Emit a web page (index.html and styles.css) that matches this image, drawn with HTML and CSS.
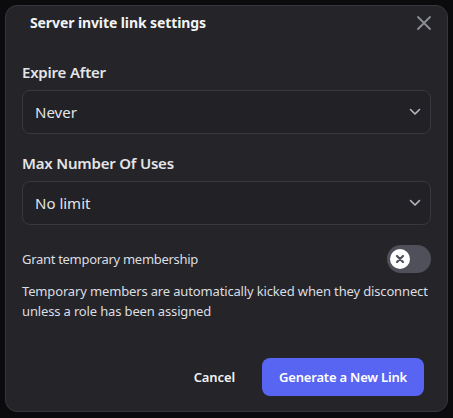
FILE: index.html
```html
<!DOCTYPE html>
<html lang="en">
<head>
    <meta charset="UTF-8">
    <meta name="viewport" content="width=device-width, initial-scale=1.0">
    <title>Server invite link settings</title>
    <link rel="stylesheet" href="styles.css">
</head>
<body>
    <div class="modal">
        <div class="modal-header">
            <h1 class="modal-title">Server invite link settings</h1>
            <button class="close-btn" aria-label="Close">
                <svg width="16" height="16" viewBox="0 0 16 16">
                    <path d="M2 2L14 14M14 2L2 14" stroke="currentColor" stroke-width="1.8" stroke-linecap="round"/>
                </svg>
            </button>
        </div>

        <div class="modal-body">
            <label class="field-label">Expire After</label>
            <div class="select">
                <span>Never</span>
                <svg class="chevron" width="12" height="8" viewBox="0 0 12 8">
                    <path d="M1.5 1.5L6 6L10.5 1.5" stroke="currentColor" stroke-width="1.6" fill="none" stroke-linecap="round" stroke-linejoin="round"/>
                </svg>
            </div>

            <label class="field-label second">Max Number Of Uses</label>
            <div class="select">
                <span>No limit</span>
                <svg class="chevron" width="12" height="8" viewBox="0 0 12 8">
                    <path d="M1.5 1.5L6 6L10.5 1.5" stroke="currentColor" stroke-width="1.6" fill="none" stroke-linecap="round" stroke-linejoin="round"/>
                </svg>
            </div>

            <div class="switch-row">
                <span>Grant temporary membership</span>
                <div class="switch">
                    <div class="knob">
                        <svg width="10" height="10" viewBox="0 0 10 10">
                            <path d="M2 2L8 8M8 2L2 8" stroke="#4f505a" stroke-width="2.2" stroke-linecap="round"/>
                        </svg>
                    </div>
                </div>
            </div>
            <p class="note">Temporary members are automatically kicked when they disconnect unless a role has been assigned</p>
        </div>

        <div class="modal-footer">
            <button class="btn-link">Cancel</button>
            <button class="btn-primary">Generate a New Link</button>
        </div>
    </div>
</body>
</html>
```

FILE: styles.css
```css
body {
    margin: 0;
    padding: 5px;
    background-color: #0b0b0d;
    font-family: "Noto Sans", "Open Sans", sans-serif;
    color: #dbdee1;
}
.modal {
    width: 443px;
    height: 407px;
    box-sizing: border-box;
    background-color: #242429;
    border: 1px solid #36363c;
    border-radius: 12px;
    display: flex;
    flex-direction: column;
}
.modal-header {
    display: flex;
    align-items: center;
    justify-content: space-between;
    padding: 7px 15px 0 24px;
}
.modal-title {
    margin: 0;
    font-size: 14px;
    line-height: 20px;
    font-weight: 700;
    letter-spacing: -0.1px;
    color: #f2f3f5;
}
.close-btn {
    background: none;
    border: none;
    padding: 0;
    width: 16px;
    height: 16px;
    color: #8e8f96;
    cursor: pointer;
}
.modal-body {
    padding: 29px 16px 0 16px;
}
.field-label {
    display: block;
    font-size: 15px;
    line-height: 20px;
    font-weight: 600;
    letter-spacing: -0.2px;
    color: #e3e5e8;
    margin-bottom: 8px;
}
.field-label.second {
    margin-top: 19px;
}
.select {
    height: 44px;
    box-sizing: border-box;
    border: 1px solid #38383e;
    border-radius: 8px;
    background-color: #212126;
    display: flex;
    align-items: center;
    justify-content: space-between;
    padding: 0 9px 0 12px;
    font-size: 15px;
    color: #e3e5e8;
}
.chevron {
    color: #b5bac1;
}
.switch-row {
    display: flex;
    align-items: center;
    justify-content: space-between;
    margin-top: 20px;
    font-size: 13px;
    letter-spacing: -0.3px;
    color: #dbdee1;
}
.switch {
    width: 44px;
    height: 28px;
    border-radius: 14px;
    background-color: #4f505a;
    display: flex;
    align-items: center;
    padding-left: 3px;
    box-sizing: border-box;
}
.knob {
    width: 20px;
    height: 20px;
    border-radius: 50%;
    background-color: #ffffff;
    display: flex;
    align-items: center;
    justify-content: center;
}
.note {
    margin: 8px 0 0 0;
    font-size: 13px;
    line-height: 20px;
    letter-spacing: -0.15px;
    color: #dbdee1;
}
.modal-footer {
    margin-top: auto;
    display: flex;
    justify-content: flex-end;
    align-items: center;
    gap: 11px;
    padding: 0 23px 15px 0;
}
.btn-link {
    background: none;
    border: none;
    color: #f2f3f5;
    font-family: inherit;
    font-size: 13px;
    font-weight: 600;
    letter-spacing: -0.1px;
    padding: 0 16px;
    height: 38px;
    cursor: pointer;
}
.btn-primary {
    background-color: #5865f2;
    border: none;
    border-radius: 8px;
    color: #ffffff;
    font-family: inherit;
    font-size: 13px;
    font-weight: 600;
    letter-spacing: -0.2px;
    height: 38px;
    padding: 0 17px;
    cursor: pointer;
}
```
